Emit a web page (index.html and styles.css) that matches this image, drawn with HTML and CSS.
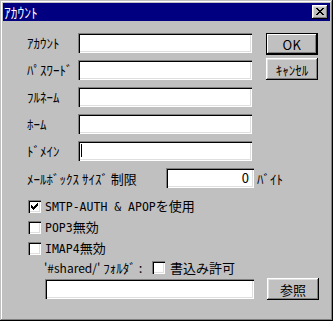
FILE: index.html
```html
<!DOCTYPE html>
<html lang="ja">
<head>
<meta charset="utf-8">
<title>ｱｶｳﾝﾄ</title>
<link rel="stylesheet" href="styles.css">
</head>
<body>
<div class="window">
  <div class="titlebar">
    <span class="title">ｱｶｳﾝﾄ</span>
    <span class="close">
      <svg width="8" height="7" viewBox="0 0 8 7" shape-rendering="crispEdges">
        <path fill="#000" d="M0 0h2v1H0zM6 0h2v1H6zM1 1h2v1H1zM5 1h2v1H5zM2 2h4v1H2zM3 3h2v1H3zM2 4h4v1H2zM1 5h2v1H1zM5 5h2v1H5zM0 6h2v1H0zM6 6h2v1H6z"/>
      </svg>
    </span>
  </div>
  <div class="body">
    <div class="top">
      <div class="fields">
        <div class="field"><span class="label">ｱｶｳﾝﾄ</span><span class="input"></span></div>
        <div class="field"><span class="label">ﾊﾟｽﾜｰﾄﾞ</span><span class="input"></span></div>
        <div class="field"><span class="label">ﾌﾙﾈｰﾑ</span><span class="input"></span></div>
        <div class="field"><span class="label">ﾎｰﾑ</span><span class="input"></span></div>
        <div class="field"><span class="label">ﾄﾞﾒｲﾝ</span><span class="input"><span class="caret"></span></span></div>
      </div>
      <div class="buttons">
        <div class="btn default"><span class="ok">OK</span></div>
        <div class="btn">ｷｬﾝｾﾙ</div>
      </div>
    </div>
    <div class="size-row">
      <span class="size-label">ﾒｰﾙﾎﾞｯｸｽ ｻｲｽﾞ 制限</span>
      <span class="input num">0</span>
      <span class="unit">ﾊﾞｲﾄ</span>
    </div>
    <div class="checks">
      <div class="check-row">
        <span class="checkbox">
          <svg width="7" height="7" viewBox="0 0 7 7" shape-rendering="crispEdges">
            <path fill="#000" d="M6 0h1v1H6zM5 1h2v1H5zM0 2h1v1H0zM4 2h3v1H4zM0 3h2v1H0zM3 3h3v1H3zM0 4h5v1H0zM1 5h3v1H1zM2 6h1v1H2z"/>
          </svg>
        </span>
        <span class="check-text"><span class="en">SMTP-AUTH &amp; APOP</span>を使用</span>
      </div>
      <div class="check-row"><span class="checkbox"></span><span class="check-text"><span class="en">POP3</span>無効</span></div>
      <div class="check-row"><span class="checkbox"></span><span class="check-text"><span class="en">IMAP4</span>無効</span></div>
    </div>
    <div class="shared-row">
      <span class="shared-label"><span class="sh">'#shared/'</span> ﾌｫﾙﾀﾞ :</span>
      <span class="checkbox"></span>
      <span class="check-text">書込み許可</span>
    </div>
    <div class="browse-row">
      <span class="input path"></span>
      <div class="btn browse">参照</div>
    </div>
  </div>
</div>
</body>
</html>
```

FILE: styles.css
```css
html, body {
  margin: 0;
  padding: 0;
  background: #c0c0c0;
}

body {
  font-family: "Noto Sans CJK JP", "Liberation Sans", sans-serif;
  font-size: 13px;
  color: #000;
}

.en {
  font-family: "DejaVu Sans Mono", "Noto Sans CJK JP", monospace;
  font-size: 11.5px;
}

.sh {
  font-size: 12px;
}

.window {
  width: 333px;
  height: 321px;
  box-sizing: border-box;
  padding: 3px;
  background: #c0c0c0;
  box-shadow:
    inset -1px -1px #000,
    inset 1px 1px #c0c0c0,
    inset -2px -2px #808080,
    inset 2px 2px #fff;
}

.titlebar {
  height: 18px;
  background: #000080;
  display: flex;
  align-items: center;
  padding-left: 1px;
}

.title {
  color: #fff;
  font-size: 13.5px;
  line-height: 18px;
}

.close {
  margin-left: auto;
  margin-right: 2px;
  width: 16px;
  height: 14px;
  box-sizing: border-box;
  background: #c0c0c0;
  box-shadow:
    inset -1px -1px #000,
    inset 1px 1px #fff,
    inset -2px -2px #808080,
    inset 2px 2px #dfdfdf;
  display: flex;
  align-items: center;
  justify-content: center;
  padding: 0 1px 1px 0;
}

.close svg, .checkbox svg {
  display: block;
}

.body {
  padding: 12px 0 0 24px;
}

.top {
  display: flex;
  align-items: flex-start;
}

.fields {
  display: flex;
  flex-direction: column;
  gap: 7px;
}

.field {
  display: flex;
  align-items: center;
  height: 20px;
}

.label {
  width: 51px;
  flex: none;
  line-height: 20px;
  white-space: nowrap;
}

.input {
  display: block;
  position: relative;
  width: 174px;
  height: 20px;
  flex: none;
  box-sizing: border-box;
  background: #fff;
  box-shadow:
    inset 1px 1px #808080,
    inset 2px 2px #000,
    inset -1px -1px #fff,
    inset -2px -2px #dfdfdf;
}

.caret {
  position: absolute;
  left: 3px;
  top: 3px;
  width: 1px;
  height: 13px;
  background: #000;
}

.buttons {
  margin-left: 14px;
  display: flex;
  flex-direction: column;
  gap: 3px;
}

.btn {
  width: 52px;
  height: 22px;
  box-sizing: border-box;
  background: #c0c0c0;
  display: flex;
  align-items: center;
  justify-content: center;
  line-height: 1;
  box-shadow:
    inset -1px -1px #000,
    inset 1px 1px #fff,
    inset -2px -2px #808080,
    inset 2px 2px #dfdfdf;
}

.ok {
  font-size: 13px;
  letter-spacing: 0.5px;
}

.btn.default {
  box-shadow:
    inset 0 0 0 1px #000,
    inset -2px -2px #000,
    inset 2px 2px #fff,
    inset -3px -3px #808080;
}

.size-row {
  display: flex;
  align-items: center;
  height: 20px;
  margin-top: 7px;
}

.size-label {
  width: 139px;
  flex: none;
  white-space: nowrap;
}

.input.num {
  width: 88px;
  text-align: right;
  padding-right: 5px;
  line-height: 20px;
}

.unit {
  margin-left: 3px;
}

.checks {
  margin-top: 12px;
  margin-left: 1px;
  display: flex;
  flex-direction: column;
  gap: 8px;
}

.check-row {
  display: flex;
  align-items: center;
  height: 13px;
}

.checkbox {
  width: 13px;
  height: 13px;
  box-sizing: border-box;
  flex: none;
  background: #fff;
  display: flex;
  align-items: center;
  justify-content: center;
  box-shadow:
    inset 1px 1px #808080,
    inset 2px 2px #000,
    inset -1px -1px #fff,
    inset -2px -2px #dfdfdf;
}

.check-text {
  margin-left: 4px;
  line-height: 13px;
  white-space: nowrap;
}

.shared-row {
  display: flex;
  align-items: center;
  height: 13px;
  margin-top: 6px;
  margin-left: 17px;
}

.shared-label {
  width: 108px;
  flex: none;
  white-space: pre;
}

.shared-row .check-text {
  margin-left: 5px;
}

.browse-row {
  display: flex;
  align-items: center;
  margin-top: 4px;
  margin-left: 18px;
}

.input.path {
  width: 209px;
}

.btn.browse {
  margin-left: 13px;
}
```
